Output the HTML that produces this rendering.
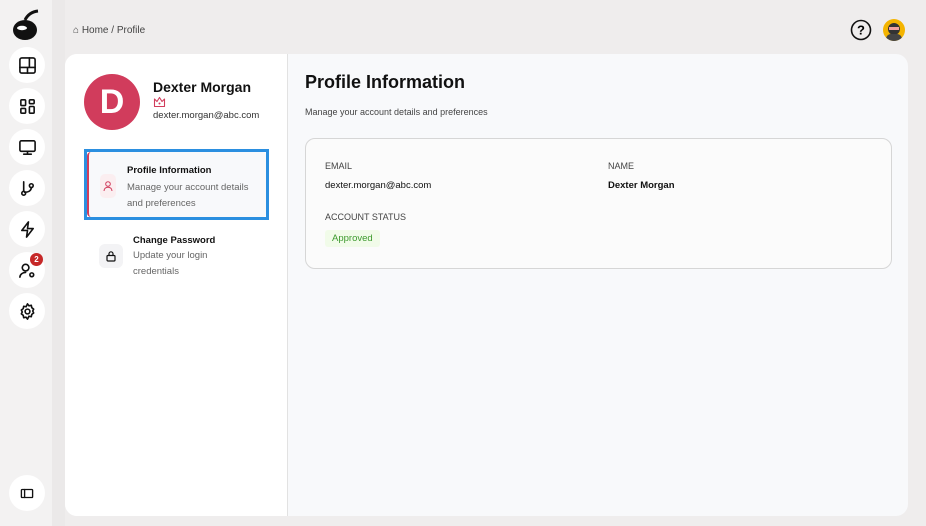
<!DOCTYPE html>
<html><head><style>
*{box-sizing:border-box;margin:0;padding:0}
body{width:926px;height:526px;overflow:hidden;background:#efeded;font-family:"Liberation Sans",sans-serif;position:relative;color:#111}
.side{position:absolute;left:0;top:0;width:52px;height:526px;background:#f3f2f2}
.ic{position:absolute;left:9px;width:36px;height:36px;border-radius:50%;background:#fff;display:flex;align-items:center;justify-content:center}
.ic svg{width:19px;height:19px;fill:none;stroke:#111;stroke-width:1.7;stroke-linecap:round;stroke-linejoin:round}
.card{position:absolute;left:65px;top:54px;width:843px;height:462px;border-radius:12px;background:#f8f9fb;overflow:hidden}
.lp{position:absolute;left:0;top:0;width:223px;height:462px;background:#fff;border-right:1px solid #e2e2e2}
.muted{color:#666}
</style></head><body>
<div class="side">
<svg style="position:absolute;left:11px;top:6px" width="30" height="36" viewBox="0 0 30 36"><ellipse cx="14" cy="24" rx="12" ry="10" fill="#111"/><path d="M14 14 Q18 6 27 5" stroke="#111" stroke-width="3" fill="none"/><ellipse cx="11" cy="22" rx="5" ry="2.2" fill="#fff"/></svg>
<div class="ic" style="top:47px"><svg viewBox="0 0 20 20"><rect x="2" y="2" width="16" height="16" rx="2"/><path d="M2 12h16M10 12v6M12 2v10"/></svg></div>
<div class="ic" style="top:88px"><svg viewBox="0 0 20 20"><rect x="3" y="3" width="5" height="6" rx="1"/><rect x="12" y="3" width="5" height="4" rx="1"/><rect x="3" y="12" width="5" height="5" rx="1"/><rect x="12" y="10" width="5" height="7" rx="1"/></svg></div>
<div class="ic" style="top:129px"><svg viewBox="0 0 20 20"><rect x="2" y="3" width="16" height="11" rx="1.5"/><path d="M10 14v3M6 17h8"/></svg></div>
<div class="ic" style="top:170px"><svg viewBox="0 0 20 20"><circle cx="6" cy="15" r="2"/><circle cx="14" cy="7" r="2"/><path d="M6 3v10M14 9c0 4-4 5-7 5"/></svg></div>
<div class="ic" style="top:211px"><svg viewBox="0 0 20 20"><path d="M11 2L4 11h6l-1 7 7-9h-6z"/></svg></div>
<div class="ic" style="top:252px"><svg viewBox="0 0 20 20"><circle cx="8" cy="7" r="3.5"/><path d="M2 17c0-3 3-5 6-5"/><circle cx="14.5" cy="14.5" r="2"/></svg></div>
<div style="position:absolute;left:30px;top:253px;width:13px;height:13px;border-radius:50%;background:#c62828;color:#fff;font-size:8px;font-weight:bold;text-align:center;line-height:13px">2</div>
<div class="ic" style="top:293px"><svg viewBox="0 0 20 20"><circle cx="10" cy="10" r="2.5"/><path d="M10 2l1.5 2 2.5-.5.5 2.5 2 1.5-1 2 1 2-2 1.5-.5 2.5-2.5-.5L10 18l-1.5-2-2.5.5-.5-2.5-2-1.5 1-2-1-2 2-1.5.5-2.5 2.5.5z"/></svg></div>
<div class="ic" style="top:475px"><svg viewBox="0 0 20 20" style="width:16px"><rect x="3" y="5" width="14" height="10" rx="1"/><path d="M7 5v10"/></svg></div>
</div>
<div style="position:absolute;left:52px;top:0;width:13px;height:526px;background:#ebe9e9"></div>
<div style="position:absolute;left:73px;top:25px;font-size:10px;color:#444">⌂ Home / Profile</div>
<svg style="position:absolute;left:850px;top:19px" width="22" height="22" viewBox="0 0 22 22"><circle cx="11" cy="11" r="9.5" fill="none" stroke="#111" stroke-width="1.6"/><text x="11" y="15.5" font-size="13" text-anchor="middle" font-family="Liberation Sans" font-weight="bold">?</text></svg>
<div style="position:absolute;left:883px;top:19px;width:22px;height:22px;border-radius:50%;background:#f4b400;overflow:hidden"><div style="position:absolute;left:5px;top:4px;width:12px;height:12px;border-radius:50%;background:#333"></div><div style="position:absolute;left:6px;top:8px;width:10px;height:3px;background:#f0a0a0"></div><div style="position:absolute;left:3px;top:15px;width:16px;height:10px;border-radius:6px;background:#444"></div></div>
<div class="card">
<div class="lp">
<div style="position:absolute;left:19px;top:20px;width:56px;height:56px;border-radius:50%;background:#d13c5c;color:#fff;font-size:34px;font-weight:bold;text-align:center;line-height:56px">D</div>
<div style="position:absolute;left:88px;top:25px;font-size:14px;font-weight:bold">Dexter Morgan</div>
<svg style="position:absolute;left:88px;top:42px" width="13" height="12" viewBox="0 0 13 12"><path d="M1.5 10.5h10V3l-2.5 2.5L6.5 1.5 4 5.5 1.5 3z" fill="none" stroke="#d13c5c" stroke-width="1.1" stroke-linejoin="round"/><circle cx="6.5" cy="7.5" r="1" fill="#d13c5c"/></svg>
<div style="position:absolute;left:88px;top:56px;font-size:9.5px;color:#333">dexter.morgan@abc.com</div>
<div style="position:absolute;left:19px;top:95px;width:185px;height:71px;border:3px solid #2b8fe0"><div style="position:absolute;inset:0;border-left:2px solid #d13c5c;border-radius:4px;background:#f8f9fb"></div>
<div style="position:absolute;left:13px;top:22px;width:16px;height:24px;border-radius:5px;background:#fbeef0"><svg style="position:absolute;left:2px;top:6px" width="12" height="12" viewBox="0 0 12 12"><circle cx="6" cy="4" r="2.3" fill="none" stroke="#d13c5c" stroke-width="1"/><path d="M2 11c0-2.5 2-3.8 4-3.8s4 1.3 4 3.8" fill="none" stroke="#d13c5c" stroke-width="1"/></svg></div>
<div style="position:absolute;left:40px;top:13px;font-size:9.5px;font-weight:bold;color:#111">Profile Information</div>
<div class="muted" style="position:absolute;left:40px;top:28px;font-size:9.5px;line-height:16px">Manage your account details<br>and preferences</div></div>
<div style="position:absolute;left:34px;top:190px;width:24px;height:24px;border-radius:6px;background:#f3f3f5"><svg style="position:absolute;left:6px;top:6px" width="12" height="12" viewBox="0 0 12 12"><rect x="2" y="5.5" width="8" height="5.5" rx="1" fill="none" stroke="#111" stroke-width="1.2"/><path d="M4 5.5V3.8a2 2 0 0 1 4 0v1.7" fill="none" stroke="#111" stroke-width="1.2"/></svg></div>
<div style="position:absolute;left:68px;top:181px;font-size:9.5px;font-weight:bold">Change Password</div>
<div class="muted" style="position:absolute;left:68px;top:194px;font-size:9.5px;line-height:16px">Update your login<br>credentials</div>
</div>
<div style="position:absolute;left:240px;top:18px;font-size:18px;font-weight:bold">Profile Information</div>
<div style="position:absolute;left:240px;top:53px;font-size:9px;color:#444">Manage your account details and preferences</div>
<div style="position:absolute;left:240px;top:84px;width:587px;height:131px;border:1px solid #d6d6d6;border-radius:10px;background:#fbfbfb">
<div style="position:absolute;left:19px;top:22px;font-size:9px;color:#444">EMAIL</div>
<div style="position:absolute;left:19px;top:41px;font-size:9.5px">dexter.morgan@abc.com</div>
<div style="position:absolute;left:302px;top:22px;font-size:9px;color:#444">NAME</div>
<div style="position:absolute;left:302px;top:41px;font-size:9.5px;font-weight:bold">Dexter Morgan</div>
<div style="position:absolute;left:19px;top:73px;font-size:9px;color:#444">ACCOUNT STATUS</div>
<div style="position:absolute;left:19px;top:91px;padding:3px 7px;font-size:9.5px;color:#3d9a2e;background:#f1fbe9;border-radius:3px">Approved</div>
</div>
</div>
</body></html>
